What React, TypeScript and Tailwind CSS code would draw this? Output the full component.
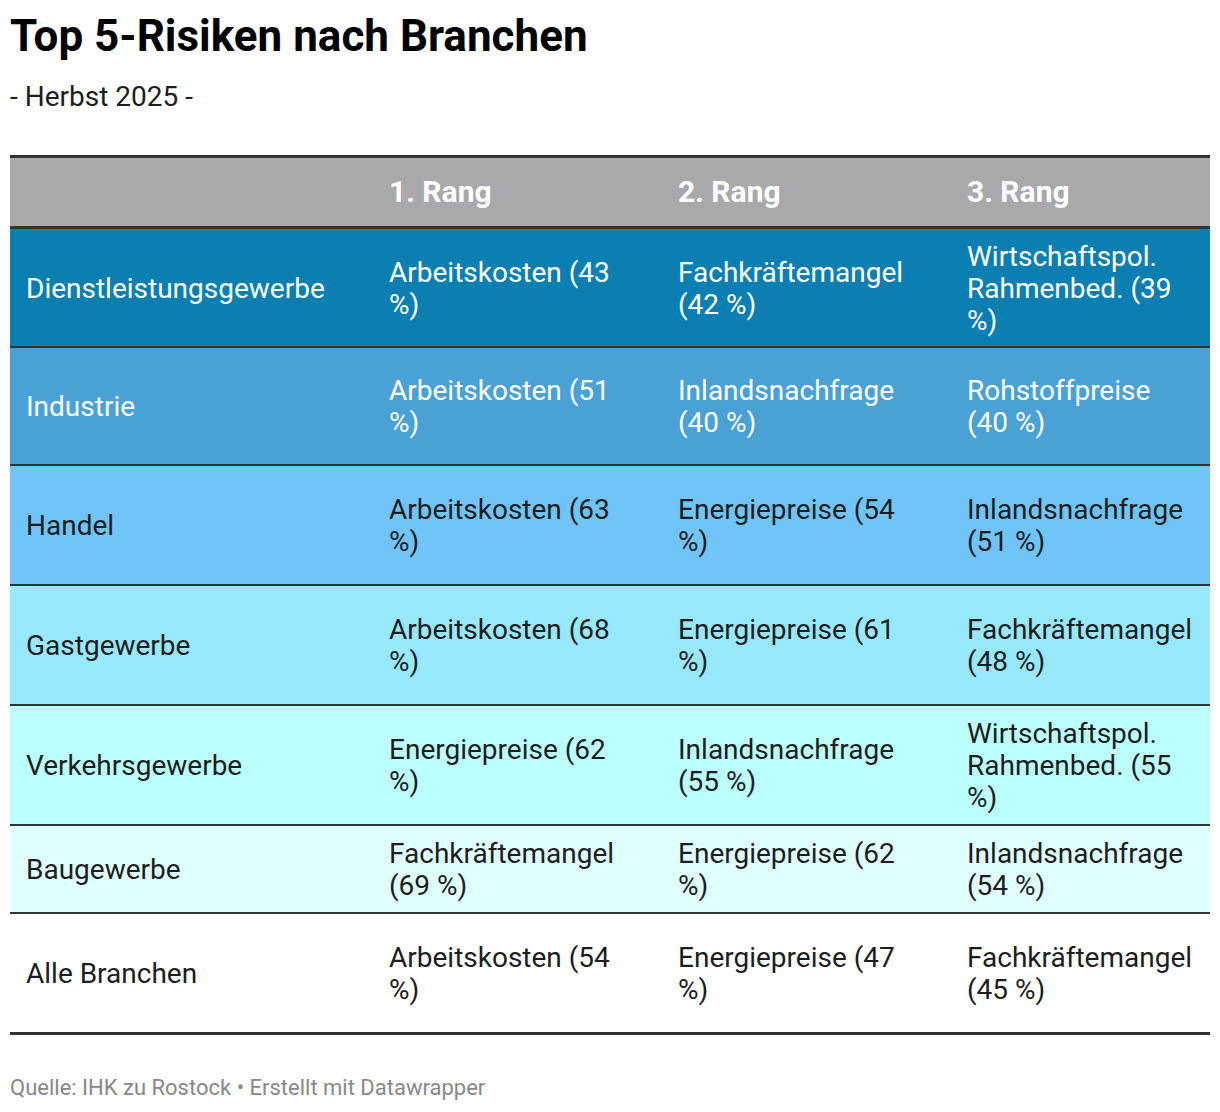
import React from "react";

type Row = {
  name: string;
  cells: string[][];
  bg: string;
  text: string;
  h: string;
  border: boolean;
};

const rows: Row[] = [
  {
    name: "Dienstleistungsgewerbe",
    cells: [["Arbeitskosten (43", "%)"], ["Fachkräftemangel", "(42 %)"], ["Wirtschaftspol.", "Rahmenbed. (39", "%)"]],
    bg: "bg-[#0b7fb2]",
    text: "text-white",
    h: "h-[119px]",
    border: true,
  },
  {
    name: "Industrie",
    cells: [["Arbeitskosten (51", "%)"], ["Inlandsnachfrage", "(40 %)"], ["Rohstoffpreise", "(40 %)"]],
    bg: "bg-[#49a1d6]",
    text: "text-white",
    h: "h-[118px]",
    border: true,
  },
  {
    name: "Handel",
    cells: [["Arbeitskosten (63", "%)"], ["Energiepreise (54", "%)"], ["Inlandsnachfrage", "(51 %)"]],
    bg: "bg-[#70c4f8]",
    text: "text-[#1d1d1d]",
    h: "h-[120px]",
    border: true,
  },
  {
    name: "Gastgewerbe",
    cells: [["Arbeitskosten (68", "%)"], ["Energiepreise (61", "%)"], ["Fachkräftemangel", "(48 %)"]],
    bg: "bg-[#98e8fe]",
    text: "text-[#1d1d1d]",
    h: "h-[120px]",
    border: true,
  },
  {
    name: "Verkehrsgewerbe",
    cells: [["Energiepreise (62", "%)"], ["Inlandsnachfrage", "(55 %)"], ["Wirtschaftspol.", "Rahmenbed. (55", "%)"]],
    bg: "bg-[#bbffff]",
    text: "text-[#1d1d1d]",
    h: "h-[120px]",
    border: true,
  },
  {
    name: "Baugewerbe",
    cells: [["Fachkräftemangel", "(69 %)"], ["Energiepreise (62", "%)"], ["Inlandsnachfrage", "(54 %)"]],
    bg: "bg-[#e0ffff]",
    text: "text-[#1d1d1d]",
    h: "h-[88px]",
    border: true,
  },
  {
    name: "Alle Branchen",
    cells: [["Arbeitskosten (54", "%)"], ["Energiepreise (47", "%)"], ["Fachkräftemangel", "(45 %)"]],
    bg: "bg-white",
    text: "text-[#1d1d1d]",
    h: "h-[118px]",
    border: false,
  },
];

export default function App() {
  return (
    <div className="w-[1220px] h-[1112px] bg-white px-[10px] pt-[10px] font-['Roboto',sans-serif] text-[#1d1d1d]">
      <div className="text-[44px] leading-[52px] font-bold text-black">Top 5-Risiken nach Branchen</div>
      <div className="mt-[19px] text-[28px] leading-[32px] text-[#1d1d1d]">- Herbst 2025 -</div>

      <div className="mt-[42px] w-[1200px] border-t-[3px] border-b-[3px] border-[#333333]">
        <div className="grid grid-cols-[363px_289px_289px_259px] h-[71px] bg-[#a9a9ab] border-b-[3px] border-[#333333] items-center text-white font-bold text-[30px] leading-[32px]">
          <div className="pl-[16px]"></div>
          <div className="pl-[16px]">1. Rang</div>
          <div className="pl-[16px]">2. Rang</div>
          <div className="pl-[16px]">3. Rang</div>
        </div>
        {rows.map((r) => (
          <div
            key={r.name}
            className={`grid grid-cols-[363px_289px_289px_259px] items-center text-[28px] leading-[32px] ${r.bg} ${r.text} ${r.h} ${r.border ? "border-b-2 border-[#333333]" : ""}`}
          >
            <div className="pl-[16px] pt-[2px]">{r.name}</div>
            {r.cells.map((c, i) => (
              <div key={i} className="pl-[16px] pt-[2px] whitespace-nowrap">
                {c.map((line, j) => (
                  <div key={j}>{line}</div>
                ))}
              </div>
            ))}
          </div>
        ))}
      </div>

      <div className="mt-[41px] text-[22px] leading-[24px] text-[#888888]">
        Quelle: IHK zu Rostock • Erstellt mit Datawrapper
      </div>
    </div>
  );
}
